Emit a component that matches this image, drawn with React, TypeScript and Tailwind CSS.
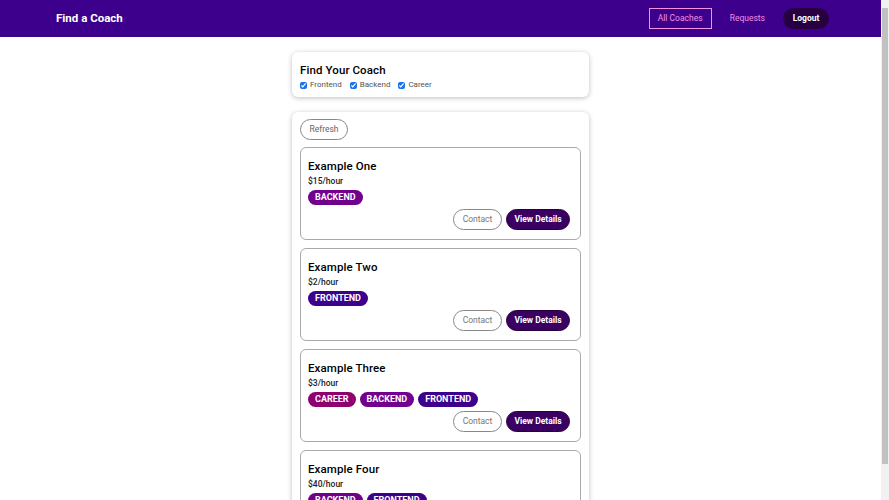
const coaches = [
  { name: 'Example One', rate: 15, areas: ['backend'] },
  { name: 'Example Two', rate: 2, areas: ['frontend'] },
  { name: 'Example Three', rate: 3, areas: ['career', 'backend', 'frontend'] },
  { name: 'Example Four', rate: 40, areas: ['backend', 'frontend'] },
];

function Badge({ area }: { area: string }) {
  const color =
    area === 'frontend' ? 'bg-[#3d008d]' : area === 'backend' ? 'bg-[#71008d]' : 'bg-[#8d006e]';
  return (
    <span className={`${color} text-white font-bold uppercase text-[9px] leading-[15px] h-[15px] px-[7px] rounded-full inline-block`}>
      {area}
    </span>
  );
}

function CoachItem({ coach }: { coach: (typeof coaches)[number] }) {
  return (
    <li className="border border-[#aaaaaa] rounded-[6px] pt-[9px] pb-[9px] pl-[7px] pr-[10px]">
      <h3 className="text-[11.5px] leading-[18px] font-medium text-black tracking-[0.1px]">{coach.name}</h3>
      <p className="text-[8.5px] leading-[12px] font-medium text-[#222]">${coach.rate}/hour</p>
      <div className="flex gap-[4px] mt-[3px]">
        {coach.areas.map((a) => (
          <Badge key={a} area={a} />
        ))}
      </div>
      <div className="flex justify-end gap-[4px] mt-[4px]">
        <button className="h-[21px] w-[49px] rounded-full border border-[#888] text-[8.5px] text-[#777] bg-white">Contact</button>
        <button className="h-[21px] w-[64px] rounded-full border border-[#270041] bg-[#3a0061] text-[8.5px] text-white font-bold">View Details</button>
      </div>
    </li>
  );
}

export default function App() {
  return (
    <div className="min-h-screen bg-white font-['Roboto',sans-serif] pr-[8px]">
      <header className="h-[37px] bg-[#3d008d] flex items-center justify-between pl-[56px] pr-[52px]">
        <h1 className="text-white font-bold text-[11.5px] mt-[1px]">Find a Coach</h1>
        <nav className="flex items-center text-[8.5px]">
          <a className="h-[21px] w-[63px] border border-[#f391e3] text-[#f391e3] flex items-center justify-center">All Coaches</a>
          <a className="ml-[18px] text-[#f391e3]">Requests</a>
          <button className="ml-[18px] h-[21px] w-[46px] rounded-full bg-[#270041] text-white font-bold">Logout</button>
        </nav>
      </header>
      <main className="w-[297px] mx-auto pt-[15px] pb-[40px] flex flex-col gap-[15px]">
        <section className="rounded-[6px] shadow-[0_1px_5px_rgba(0,0,0,0.26)] px-[8px] pt-[10px] pb-[6px]">
          <h2 className="text-[11.5px] leading-[16px] font-medium text-black tracking-[0.1px]">Find Your Coach</h2>
          <div className="flex gap-[8px] text-[8px] text-[#555] mt-[1px] items-center">
            {['Frontend', 'Backend', 'Career'].map((f) => (
              <label key={f} className="flex items-center gap-[3px]">
                <input type="checkbox" defaultChecked className="w-[7px] h-[7px] accent-[#1a73e8]" />
                {f}
              </label>
            ))}
          </div>
        </section>
        <section className="rounded-[6px] shadow-[0_1px_5px_rgba(0,0,0,0.26)] px-[8px] pt-[7px] pb-[8px]">
          <button className="block h-[21px] w-[48px] rounded-full border border-[#888] text-[8.5px] text-[#666] bg-white">Refresh</button>
          <ul className="flex flex-col gap-[8px] mt-[7px]">
            {coaches.map((c) => (
              <CoachItem key={c.name} coach={c} />
            ))}
          </ul>
        </section>
      </main>
      <div className="fixed top-0 right-0 w-[8px] h-screen bg-[#f1f1f1] flex justify-center pt-[8px] pb-[36px]">
        <div className="w-[6px] h-full bg-[#c1c1c1]" />
      </div>
    </div>
  );
}
